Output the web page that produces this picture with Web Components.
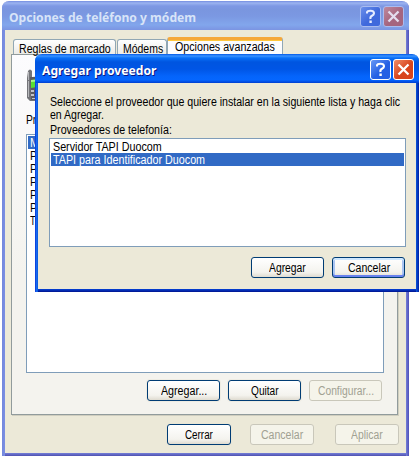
<!DOCTYPE html>
<html lang="es"><head><meta charset="utf-8"><title>Opciones de teléfono y módem</title>
<style>
html,body{margin:0;height:100%;background:#fff;overflow:hidden}
</style></head><body>
<phone-app></phone-app>
<script>
const define=(name,html,init)=>customElements.define(name,class extends HTMLElement{
  constructor(){super();this.attachShadow({mode:'open'}).innerHTML=html;}
  connectedCallback(){if(init)init(this);}
});

/* A line of text condensed to the width given by its w attribute. */
define('fit-text',`<style>
:host{display:block;height:13px;line-height:15px;font-size:12.3px;white-space:nowrap;flex:none}
span{display:inline-block;transform-origin:0 50%}
</style><span><slot></slot></span>`,el=>{
  const w=+el.getAttribute('w');el.style.width=w+'px';
  const s=el.shadowRoot.querySelector('span');
  requestAnimationFrame(()=>{s.style.transform='scaleX('+w/s.offsetWidth+')';});
  if(s.offsetWidth)s.style.transform='scaleX('+w/s.offsetWidth+')';
});

define('xp-button',`<style>
:host{display:flex;box-sizing:border-box;width:73px;height:21px;border:1px solid #003c74;border-radius:3px;
 background:linear-gradient(#fff,#f4f3ee 75%,#dfdbd0);align-items:center;justify-content:center;color:#000;flex:none;box-shadow:0 0 0 1px #e6e2d266}
:host([wide]){width:64px}
:host([focused]){box-shadow:inset 0 2px #cee7ff,inset 0 -2px #6982ee,inset 2px 0 #aac4f2,inset -2px 0 #aac4f2}
:host([disabled]){border-color:#c9c7ba;background:#f5f4ea;color:#a1a192;box-shadow:none}
</style><slot></slot>`);

define('caption-button',`<style>
:host{display:block;width:21px;height:21px;flex:none}svg{display:block}
</style><svg width="21" height="21" viewBox="0 0 21 21"></svg>`,el=>{
  const close=el.hasAttribute('close'),off=el.hasAttribute('inactive');
  const id='g';
  const a=close?(off?['#c08a9d','#a5657f']:['#f0906c','#d8441c']):(off?['#6c90ea','#3f69dc']:['#6b9bf5','#2560e4']);
  el.shadowRoot.querySelector('svg').innerHTML=`<defs><linearGradient id="${id}" x2="1" y2="1"><stop stop-color="${a[0]}"/><stop offset=".55" stop-color="${a[1]}"/><stop offset="1" stop-color="${a[1]}"/></linearGradient></defs>
  <rect x=".5" y=".5" width="20" height="20" rx="2.5" fill="url(#${id})" stroke="${off?'#a9bcf0':'#fff'}"/>`+
  (close?`<path d="M5.5 5.5l10 10M15.5 5.5l-10 10" stroke="${off?'#e3dcee':'#fff'}" stroke-width="2.3"/>`
  :`<path d="M7 7.6V6.5Q7 4.8 10.5 4.8T14 7.3Q14 8.8 12 9.8T10.5 13" fill="none" stroke="${off?'#e6ecff':'#fff'}" stroke-width="2.1"/><path d="M9.4 14.5h2.4v2.4H9.4z" fill="${off?'#e6ecff':'#fff'}"/>`);
});

define('xp-window',`<style>
:host{display:flex;flex-direction:column;box-sizing:border-box;position:absolute;border-radius:7px 7px 0 0;overflow:hidden;
 background:linear-gradient(90deg,#0831d9,#166aee 1.5px,#0855dd 3px,transparent 3px,transparent calc(100% - 3px),#0855dd calc(100% - 3px),#001ea0),linear-gradient(transparent calc(100% - 3px),#0543d8 calc(100% - 3px),#00138c),#ece9d8}
:host([inactive]){background:linear-gradient(90deg,#7488dc,#7b8fe3 3px,transparent 3px,transparent calc(100% - 3px),#7480d8 calc(100% - 3px),#5050b8),linear-gradient(transparent calc(100% - 3px),#7480d8 calc(100% - 3px),#5050b0),#ece9d8}
header{height:29px;flex:none;box-sizing:border-box;display:flex;align-items:center;gap:2px;padding:2px 5px 0 7px;color:#fff;
 background:linear-gradient(#0058e8 0,#3a93ff 2px,#0870f8 4px,#0055e0 8px,#0055e5 15px,#0464fb 22px,#0566ff 26px,#003fd0 29px)}
:host([inactive]) header{color:#d8e4f8;background:linear-gradient(#748ce0 0,#9cb4f0 2px,#7e98e4 5px,#7a96df 9px,#7b98e2 15px,#82a6ec 24px,#7b94e2 29px)}
fit-text{font:bold 13px/18px "Noto Sans","Open Sans",sans-serif;height:18px;margin-right:auto}
:host(:not([inactive])) fit-text{text-shadow:1px 1px #0a1883}
main{flex:1;min-height:0;padding:0 3px 3px;display:flex;flex-direction:column}
</style><header></header><main><slot></slot></main>`,el=>{
  const i=el.hasAttribute('inactive')?'inactive':'';
  el.shadowRoot.querySelector('header').innerHTML=`<fit-text w="${el.getAttribute('tw')}">${el.getAttribute('caption')}</fit-text><caption-button ${i}></caption-button><caption-button close ${i}></caption-button>`;
});

define('list-box',`<style>
:host{display:block;box-sizing:border-box;border:1px solid #7f9db9;background:#fff;padding:1px;flex:none}
</style><slot></slot>`);
define('list-item',`<style>
:host{display:block;height:13px;padding-left:2px;color:#000}
:host([selected]){background:#316ac5;color:#fff}
</style><slot></slot>`);

define('xp-tab',`<style>
:host{display:flex;box-sizing:border-box;height:15px;border:1px solid #91a7b4;border-bottom:0;border-radius:3px 3px 0 0;background:linear-gradient(#fff,#ecebe6);padding:2px 0 0 5px;flex:none}
:host([active]){height:18px;background:#fcfcfe;border-top:3px solid #ffc73c;border-top-color:#f5a83a;box-shadow:inset 0 1px #ffc73c;padding:0 0 0 7px;margin-bottom:-1px;position:relative}
</style><slot></slot>`);

define('cell-phone',`<style>:host{display:block;width:18px;height:34px;flex:none}svg{display:block}</style>
<svg width="18" height="34" viewBox="0 0 18 34"><path d="M2 2q2-3 4 0v6l11-1v25H4L1 29V9z" fill="#737478"/><path d="M2 3h1v8H2zM2 12h1v16H2z" fill="#b6b7ba"/><path d="M4 8h13v23H5z" fill="#5a5b60"/><path d="M5 11l12-1v7l-12 2z" fill="#57df32"/><path d="M5 11l12-1v2l-12 1z" fill="#aef58d"/><path d="M5 21h3v2H5zm4 0h3v2H9zm-4 4h3v2H5zm4 0h3v2H9zm-3 4h3v1H6z" fill="#c2c4ca"/></svg>`);

define('phone-app',`<style>
:host{display:block;position:relative;width:419px;height:457px;overflow:hidden;font-family:"Liberation Sans",Arial,sans-serif;color:#000}
.back{left:2px;top:1px;width:407px;height:455px}
.front{left:35px;top:54px;width:384px;height:238px}
.tabs{display:flex;align-items:flex-end;height:17px;padding:7px 0 0 8px;flex:none}
.panel{box-sizing:border-box;margin-left:6px;width:387px;height:361px;border:1px solid #919b9c;background:linear-gradient(#fcfcfe,#f4f3ee 60%);box-shadow:1px 1px #d0cebf;padding:14px 0 0 14px;display:flex;flex-direction:column;flex:none}
.plabel{margin:10px 0 8px}
.outer{width:358px;height:239px}
.row{display:flex;gap:8px;padding:7px 0 0 121px}
.foot{display:flex;padding:9px 0 0 162px}
.inner{display:flex;flex-direction:column;padding:12px 0 0 12px}
.il{width:357px;height:109px;margin:2px 0 10px -1px}
.ib{display:flex;gap:8px;padding-left:201px}
.msg{margin-left:1px}
</style>
<xp-window class="back" inactive caption="Opciones de teléfono y módem" tw="187">
 <div class="tabs"><xp-tab style="width:103px"><fit-text w="92">Reglas de marcado</fit-text></xp-tab><xp-tab style="width:50px;margin-left:1px"><fit-text w="40">Módems</fit-text></xp-tab><xp-tab active style="width:116px"><fit-text w="100">Opciones avanzadas</fit-text></xp-tab></div>
 <div class="panel"><cell-phone></cell-phone>
  <fit-text class="plabel" w="10">Pr</fit-text>
  <list-box class="outer"><list-item selected><fit-text w="9">M</fit-text></list-item><list-item><fit-text w="7">P</fit-text></list-item><list-item><fit-text w="7">P</fit-text></list-item><list-item><fit-text w="7">P</fit-text></list-item><list-item><fit-text w="7">P</fit-text></list-item><list-item><fit-text w="7">P</fit-text></list-item><list-item><fit-text w="6">T</fit-text></list-item></list-box>
  <div class="row"><xp-button><fit-text w="46">Agregar...</fit-text></xp-button><xp-button><fit-text w="28">Quitar</fit-text></xp-button><xp-button disabled><fit-text w="56">Configurar...</fit-text></xp-button></div>
 </div>
 <div class="foot"><xp-button wide><fit-text w="28">Cerrar</fit-text></xp-button><xp-button wide disabled style="margin-left:19px"><fit-text w="42">Cancelar</fit-text></xp-button><xp-button wide disabled style="margin-left:21px"><fit-text w="32">Aplicar</fit-text></xp-button></div>
</xp-window>
<xp-window class="front" caption="Agregar proveedor" tw="114">
 <div class="inner">
  <fit-text w="350">Seleccione el proveedor que quiere instalar en la siguiente lista y haga clic</fit-text>
  <fit-text w="54">en Agregar.</fit-text>
  <fit-text w="122" style="margin-top:2px">Proveedores de telefonía:</fit-text>
  <list-box class="il"><list-item><fit-text w="109">Servidor TAPI Duocom</fit-text></list-item><list-item selected><fit-text w="152">TAPI para Identificador Duocom</fit-text></list-item></list-box>
  <div class="ib"><xp-button><fit-text w="37">Agregar</fit-text></xp-button><xp-button focused><fit-text w="42">Cancelar</fit-text></xp-button></div>
 </div>
</xp-window>`);
</script></body></html>
